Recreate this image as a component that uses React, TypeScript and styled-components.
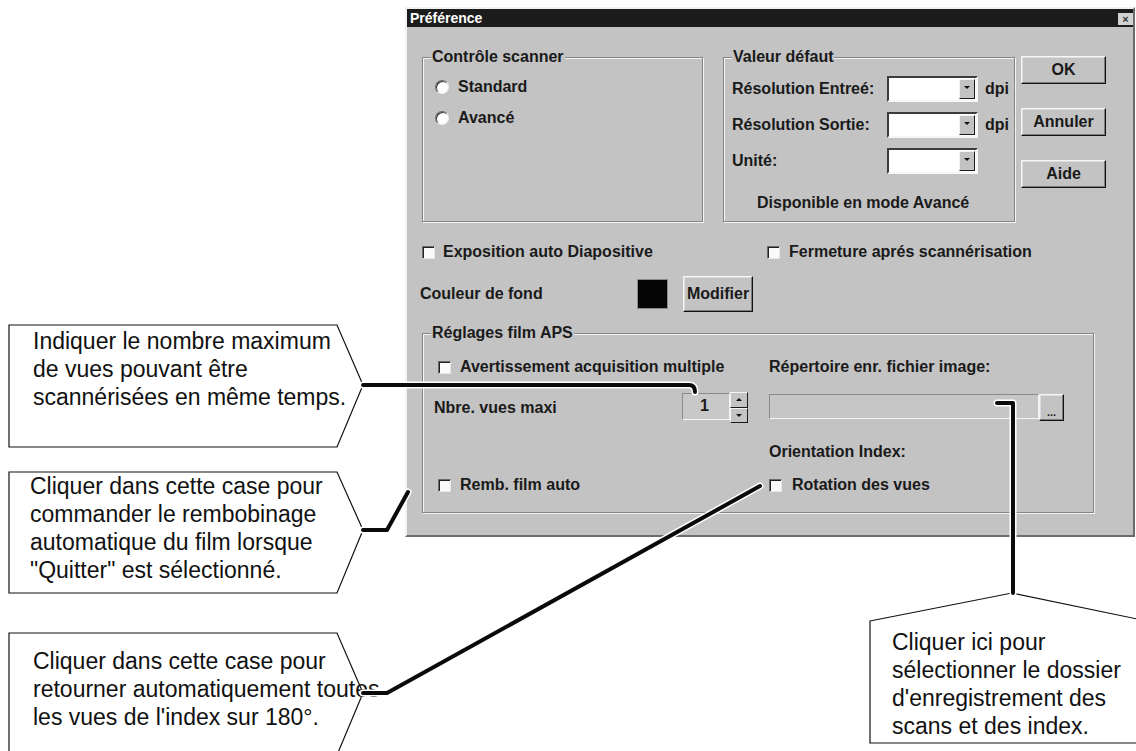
import React from "react";
import styled, { createGlobalStyle } from "styled-components";

const GlobalStyle = createGlobalStyle`
  html, body { margin: 0; padding: 0; background: #ffffff; }
  body { font-family: "Liberation Sans", Arial, sans-serif; }
`;

const Page = styled.div`
  position: relative;
  width: 1136px;
  height: 751px;
  overflow: hidden;
  background: #ffffff;
  padding: 7px 0 0 405px;
  box-sizing: border-box;
`;

const Dialog = styled.div`
  width: 730px;
  height: 530px;
  box-sizing: border-box;
  background: #c3c3c3;
  border-style: solid;
  border-width: 2px;
  border-color: #f2f2f2 #6c6c6c #6c6c6c #f2f2f2;
  display: flex;
  flex-direction: column;
  font-family: "Liberation Sans", Arial, sans-serif;
  font-weight: bold;
  font-size: 16px;
  color: #1a1a1a;
`;

const TitleBar = styled.div`
  height: 18px;
  background: #1c1c1c;
  display: flex;
  align-items: center;
  justify-content: space-between;
  padding-left: 3px;
`;

const TitleText = styled.span`
  color: #ffffff;
  font-size: 14px;
  font-weight: bold;
`;

const CloseBox = styled.span`
  width: 15px;
  height: 12px;
  margin-top: 2px;
  background: #d2d2d2;
  color: #333;
  font-size: 11px;
  line-height: 12px;
  text-align: center;
`;

const Body = styled.div`
  display: flex;
  flex-direction: column;
  padding: 21px 0 0 15px;
`;

const TopRow = styled.div`
  display: flex;
  align-items: flex-start;
`;

const Group = styled.fieldset<{ $w: number; $h: number; $ml?: number }>`
  box-sizing: border-box;
  width: ${(p) => p.$w}px;
  height: ${(p) => p.$h}px;
  margin: 0 0 0 ${(p) => p.$ml ?? 0}px;
  padding: 0;
  min-width: 0;
  border: 1px solid #858585;
  box-shadow: inset 1px 1px 0 #f4f4f4, 1px 1px 0 #f4f4f4;
`;

const Legend = styled.legend`
  margin-left: 8px;
  padding: 0 1px;
  line-height: 18px;
  font-size: 16px;
  background: #c3c3c3;
`;

const RadioList = styled.div`
  display: flex;
  flex-direction: column;
  gap: 11px;
  padding: 11px 0 0 12px;
`;

const OptionRow = styled.label<{ $gap?: number; $indent?: number }>`
  display: flex;
  align-items: center;
  height: 20px;
  gap: ${(p) => p.$gap ?? 9}px;
  margin-left: ${(p) => p.$indent ?? 0}px;
  white-space: nowrap;
`;

const Radio = styled.span`
  width: 12px;
  height: 12px;
  border-radius: 50%;
  background: #ffffff;
  border: 1px solid;
  border-color: #6a6a6a #eeeeee #eeeeee #6a6a6a;
  box-shadow: inset 1px 1px 0 #303030;
  flex: none;
`;

const Check = styled.span`
  width: 11px;
  height: 11px;
  background: #fafafa;
  border: 1px solid;
  border-color: #6a6a6a #e6e6e6 #e6e6e6 #6a6a6a;
  box-shadow: inset 1px 1px 0 #222222;
  flex: none;
`;

const DefaultsGrid = styled.div`
  display: grid;
  grid-template-columns: 148px 91px auto;
  grid-auto-rows: 26px;
  column-gap: 7px;
  row-gap: 10px;
  align-items: center;
  padding: 10px 0 0 8px;
  white-space: nowrap;
`;

const Combo = styled.div`
  box-sizing: border-box;
  height: 26px;
  display: flex;
  justify-content: flex-end;
  background: #ffffff;
  border-style: solid;
  border-width: 2px;
  border-color: #3c3c3c #f6f6f6 #f6f6f6 #3c3c3c;
  padding: 1px;
`;

const DropButton = styled.span`
  box-sizing: border-box;
  width: 16px;
  height: 100%;
  background: #c3c3c3;
  border-style: solid;
  border-width: 1px;
  border-color: #f4f4f4 #1a1a1a #1a1a1a #f4f4f4;
  display: flex;
  justify-content: center;
  padding-top: 6px;
`;

const ArrowDown = styled.span`
  width: 0;
  height: 0;
  border-left: 3px solid transparent;
  border-right: 3px solid transparent;
  border-top: 3px solid #111;
`;

const ArrowUp = styled.span`
  width: 0;
  height: 0;
  border-left: 3px solid transparent;
  border-right: 3px solid transparent;
  border-bottom: 3px solid #111;
`;

const Note = styled.div`
  margin-top: 20px;
  padding-left: 33px;
  line-height: 18px;
`;

const ButtonColumn = styled.div`
  display: flex;
  flex-direction: column;
  gap: 24px;
  margin: 8px 0 0 6px;
`;

const Button = styled.button<{ $w: number; $h: number }>`
  box-sizing: border-box;
  width: ${(p) => p.$w}px;
  height: ${(p) => p.$h}px;
  padding: 0;
  font-family: inherit;
  font-weight: bold;
  font-size: 16px;
  color: #1a1a1a;
  background: #c3c3c3;
  border-style: solid;
  border-width: 1px;
  border-color: #f6f6f6 #111111 #111111 #f6f6f6;
  box-shadow: inset -1px -1px 0 #7e7e7e, inset 1px 1px 0 #dcdcdc;
`;

const CheckLine = styled.div`
  display: grid;
  grid-template-columns: 345px auto;
  margin-top: 20px;
  height: 20px;
  align-items: center;
`;

const ColorLine = styled.div`
  display: grid;
  grid-template-columns: 200px 29px 70px;
  column-gap: 16px;
  align-items: center;
  margin-top: 14px;
  height: 36px;
`;

const ColorLabel = styled.span`
  margin-left: -2px;
`;

const Swatch = styled.span`
  width: 29px;
  height: 28px;
  background: #050505;
  box-shadow: 0 0 0 1px #8a8a8a;
`;

const ApsGroupWrap = styled.div`
  margin-top: 12px;
`;

const ApsGrid = styled.div`
  display: grid;
  grid-template-columns: 314px 295px;
  grid-template-rows: 24px 57px 32px 34px;
  column-gap: 21px;
  align-items: center;
  padding: 13px 0 0 11px;
  white-space: nowrap;
`;

const SpinLine = styled.div`
  display: flex;
  align-items: center;
  justify-content: space-between;
`;

const Spin = styled.div`
  display: flex;
  height: 31px;
`;

const SpinField = styled.span`
  box-sizing: border-box;
  width: 48px;
  height: 27px;
  margin-top: 1px;
  border-style: solid;
  border-width: 1px;
  border-color: #8a8a8a #f4f4f4 #f4f4f4 #8a8a8a;
  background: #c8c8c8;
  text-align: right;
  padding-right: 20px;
  line-height: 24px;
`;

const SpinButtons = styled.div`
  display: flex;
  flex-direction: column;
  width: 18px;
`;

const SpinButton = styled.span`
  box-sizing: border-box;
  flex: 1;
  background: #c3c3c3;
  border-style: solid;
  border-width: 1px;
  border-color: #f4f4f4 #1a1a1a #1a1a1a #f4f4f4;
  display: flex;
  align-items: center;
  justify-content: center;
`;

const PathLine = styled.div`
  display: flex;
  align-items: flex-start;
  height: 27px;
`;

const PathField = styled.span`
  box-sizing: border-box;
  width: 270px;
  height: 25px;
  background: #c6c6c6;
  border-style: solid;
  border-width: 1px;
  border-color: #8a8a8a #f4f4f4 #f4f4f4 #8a8a8a;
`;

const DotsButton = styled(Button)`
  font-size: 11px;
  line-height: 12px;
  padding-top: 8px;
`;

const Overlay = styled.svg`
  position: absolute;
  left: 0;
  top: 0;
  pointer-events: none;
`;

const Callout = styled.div<{ $x: number; $y: number; $w: number; $h: number; $pl: number; $pt: number }>`
  position: absolute;
  left: ${(p) => p.$x}px;
  top: ${(p) => p.$y}px;
  width: ${(p) => p.$w}px;
  height: ${(p) => p.$h}px;
  box-sizing: border-box;
  padding: ${(p) => p.$pt}px 0 0 ${(p) => p.$pl}px;
  font-family: "Liberation Sans", Arial, sans-serif;
  font-size: 23px;
  line-height: 28px;
  color: #111111;
`;

const CalloutShape = styled.svg`
  position: absolute;
  left: 0;
  top: 0;
  overflow: visible;
`;

const CalloutText = styled.div`
  position: relative;
  white-space: nowrap;
`;

type CalloutProps = {
  x: number;
  y: number;
  w: number;
  h: number;
  pl: number;
  pt: number;
  points: string;
  lines: string[];
};

function CalloutBox({ x, y, w, h, pl, pt, points, lines }: CalloutProps) {
  return (
    <Callout $x={x} $y={y} $w={w} $h={h} $pl={pl} $pt={pt}>
      <CalloutShape width={w} height={h}>
        <polygon points={points} fill="#ffffff" stroke="#111" strokeWidth="1.2" />
      </CalloutShape>
      <CalloutText>
        {lines.map((l) => (
          <div key={l}>{l}</div>
        ))}
      </CalloutText>
    </Callout>
  );
}

function CheckOption({ label, gap, indent }: { label: string; gap?: number; indent?: number }) {
  return (
    <OptionRow $gap={gap} $indent={indent}>
      <Check />
      <span>{label}</span>
    </OptionRow>
  );
}

function ComboBox() {
  return (
    <Combo>
      <DropButton>
        <ArrowDown />
      </DropButton>
    </Combo>
  );
}

const leaders = [
  "M363 385 H689 Q695 385 695 392",
  "M363 530 H387 L408 492",
  "M363 693 H387 L760 486",
  "M997 403 H1013 V593",
];

export default function App() {
  return (
    <>
      <GlobalStyle />
      <Page>
        <Dialog>
          <TitleBar>
            <TitleText>Préférence</TitleText>
            <CloseBox>×</CloseBox>
          </TitleBar>
          <Body>
            <TopRow>
              <Group $w={281} $h={174}>
                <Legend>Contrôle scanner</Legend>
                <RadioList>
                  <OptionRow $gap={9}>
                    <Radio />
                    <span>Standard</span>
                  </OptionRow>
                  <OptionRow $gap={9}>
                    <Radio />
                    <span>Avancé</span>
                  </OptionRow>
                </RadioList>
              </Group>
              <Group $w={292} $h={174} $ml={20}>
                <Legend>Valeur défaut</Legend>
                <DefaultsGrid>
                  <span>Résolution Entreé:</span>
                  <ComboBox />
                  <span>dpi</span>
                  <span>Résolution Sortie:</span>
                  <ComboBox />
                  <span>dpi</span>
                  <span>Unité:</span>
                  <ComboBox />
                  <span />
                </DefaultsGrid>
                <Note>Disponible en mode Avancé</Note>
              </Group>
              <ButtonColumn>
                <Button $w={85} $h={28}>OK</Button>
                <Button $w={85} $h={28}>Annuler</Button>
                <Button $w={85} $h={28}>Aide</Button>
              </ButtonColumn>
            </TopRow>

            <CheckLine>
              <CheckOption label="Exposition auto Diapositive" gap={8} />
              <CheckOption label="Fermeture aprés scannérisation" gap={9} />
            </CheckLine>

            <ColorLine>
              <ColorLabel>Couleur de fond</ColorLabel>
              <Swatch />
              <Button $w={70} $h={36}>Modifier</Button>
            </ColorLine>

            <ApsGroupWrap>
              <Group $w={672} $h={189}>
                <Legend>Réglages film APS</Legend>
                <ApsGrid>
                  <CheckOption label="Avertissement acquisition multiple" indent={4} />
                  <span>Répertoire enr. fichier image:</span>
                  <SpinLine>
                    <span>Nbre. vues maxi</span>
                    <Spin>
                      <SpinField>1</SpinField>
                      <SpinButtons>
                        <SpinButton>
                          <ArrowUp />
                        </SpinButton>
                        <SpinButton>
                          <ArrowDown />
                        </SpinButton>
                      </SpinButtons>
                    </Spin>
                  </SpinLine>
                  <PathLine>
                    <PathField />
                    <DotsButton $w={25} $h={27}>...</DotsButton>
                  </PathLine>
                  <span />
                  <span>Orientation Index:</span>
                  <CheckOption label="Remb. film auto" indent={4} />
                  <CheckOption label="Rotation des vues" gap={10} />
                </ApsGrid>
              </Group>
            </ApsGroupWrap>
          </Body>
        </Dialog>

        <CalloutBox
          x={9}
          y={325}
          w={356}
          h={124}
          pl={24}
          pt={2}
          points="0,0 328,0 354,60 328,122 0,122"
          lines={["Indiquer le nombre maximum", "de vues pouvant être", "scannérisées en même temps."]}
        />
        <CalloutBox
          x={9}
          y={472}
          w={356}
          h={123}
          pl={21}
          pt={0}
          points="0,0 328,0 354,58 328,121 0,121"
          lines={[
            "Cliquer dans cette case pour",
            "commander le rembobinage",
            "automatique du film lorsque",
            "\"Quitter\" est sélectionné.",
          ]}
        />
        <CalloutBox
          x={9}
          y={633}
          w={356}
          h={124}
          pl={24}
          pt={14}
          points="0,0 328,0 354,60 328,122 0,122"
          lines={["Cliquer dans cette case pour", "retourner automatiquement toutes", "les vues de l'index sur 180°."]}
        />
        <CalloutBox
          x={870}
          y={593}
          w={272}
          h={152}
          pl={22}
          pt={35}
          points="0,28 142,0 272,27 272,150 0,150"
          lines={["Cliquer ici pour", "sélectionner le dossier", "d'enregistrement des", "scans et des index."]}
        />

        <Overlay width={1136} height={751}>
          {leaders.map((d) => (
            <path key={d + "h"} d={d} fill="none" stroke="#ffffff" strokeWidth={7} strokeLinecap="round" strokeLinejoin="round" />
          ))}
          {leaders.map((d) => (
            <path key={d} d={d} fill="none" stroke="#0a0a0a" strokeWidth={4} strokeLinecap="round" strokeLinejoin="round" />
          ))}
        </Overlay>
      </Page>
    </>
  );
}
